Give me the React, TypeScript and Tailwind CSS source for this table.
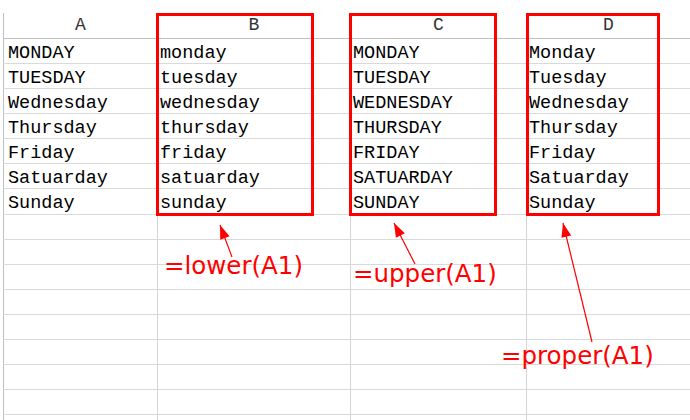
import React from "react";

const DAYS = ["MONDAY", "TUESDAY", "Wednesday", "Thursday", "Friday", "Satuarday", "Sunday"];

const proper = (s: string) => s.charAt(0).toUpperCase() + s.slice(1).toLowerCase();

const ROWS = DAYS.map((d) => [d, d.toLowerCase(), d.toUpperCase(), proper(d)]);

// column widths incl. their left border
const COLS = ["w-[154px]", "w-[193px]", "w-[176px]", "w-[164px]"];
const LETTERS = ["A", "B", "C", "D"];

const mono = { fontFamily: '"Liberation Mono", "Courier New", monospace' };
const note = { fontFamily: '"DejaVu Sans", Verdana, sans-serif' };

type Arrow = { tip: [number, number]; tail: [number, number] };

const ARROWS: Arrow[] = [
  { tip: [220, 225], tail: [232, 257] },
  { tip: [394, 223], tail: [415, 264] },
  { tip: [563, 223], tail: [592, 342] },
];

function head({ tip, tail }: Arrow) {
  const dx = tail[0] - tip[0];
  const dy = tail[1] - tip[1];
  const len = Math.hypot(dx, dy);
  const ux = dx / len;
  const uy = dy / len;
  const bx = tip[0] + ux * 14;
  const by = tip[1] + uy * 14;
  const px = -uy * 5;
  const py = ux * 5;
  return `${tip[0]},${tip[1]} ${bx + px},${by + py} ${bx - px},${by - py}`;
}

function Cell({ i, children }: { i: number; children?: React.ReactNode }) {
  return (
    <div
      className={`${COLS[i]} shrink-0 h-full border-l ${
        i === 0 ? "pl-[4px] border-[#bfbfbf]" : "pl-[2px] border-[#d4d4d4]"
      } pt-[4px] leading-[21px] text-[18.5px] text-black whitespace-nowrap`}
    >
      {children}
    </div>
  );
}

export default function App() {
  const empty = 9;
  return (
    <div className="relative w-[690px] h-[420px] overflow-hidden bg-white" style={mono}>
      <div className="pt-[13px] pl-[3px]">
        {/* column header */}
        <div className="flex h-[26px] border-b border-[#bfbfbf]">
          {LETTERS.map((l, i) => (
            <div
              key={l}
              className={`${COLS[i]} shrink-0 border-l ${
                i === 0 ? "border-[#bfbfbf]" : "border-[#d4d4d4]"
              } text-center text-[18px] leading-[24px] text-[#333]`}
            >
              {l}
            </div>
          ))}
        </div>

        {ROWS.map((r, ri) => (
          <div
            key={ri}
            className={`flex ${ri === 6 ? "h-[26px]" : "h-[25px]"} border-b border-[#d9d9d9]`}
          >
            {r.map((v, i) => (
              <Cell key={i} i={i}>
                {v}
              </Cell>
            ))}
          </div>
        ))}

        {Array.from({ length: empty }).map((_, ri) => (
          <div key={`e${ri}`} className="flex h-[25px] border-b border-[#d9d9d9]">
            {COLS.map((_, i) => (
              <Cell key={i} i={i} />
            ))}
          </div>
        ))}
      </div>

      {/* highlight boxes */}
      <div className="absolute left-[156px] top-[13px] w-[158px] h-[203px] border-[3px] border-[#ff0000]" />
      <div className="absolute left-[349px] top-[13px] w-[148px] h-[203px] border-[3px] border-[#ff0000]" />
      <div className="absolute left-[526px] top-[13px] w-[134px] h-[203px] border-[3px] border-[#ff0000]" />

      {/* arrows */}
      <svg className="absolute inset-0" width={690} height={420}>
        {ARROWS.map((a, i) => (
          <g key={i}>
            <line
              x1={a.tip[0]}
              y1={a.tip[1]}
              x2={a.tail[0]}
              y2={a.tail[1]}
              stroke="#ff0000"
              strokeWidth={1.2}
            />
            <polygon points={head(a)} fill="#ff0000" />
          </g>
        ))}
      </svg>

      {/* formula notes */}
      <div
        className="absolute left-[164px] top-[254px] text-[24.5px] leading-none text-[#ff0000] whitespace-nowrap"
        style={note}
      >
        =lower(A1)
      </div>
      <div
        className="absolute left-[353px] top-[262px] text-[24.5px] leading-none text-[#ff0000] whitespace-nowrap"
        style={note}
      >
        =upper(A1)
      </div>
      <div
        className="absolute left-[501px] top-[344px] text-[24.5px] leading-none text-[#ff0000] whitespace-nowrap"
        style={note}
      >
        =proper(A1)
      </div>
    </div>
  );
}
